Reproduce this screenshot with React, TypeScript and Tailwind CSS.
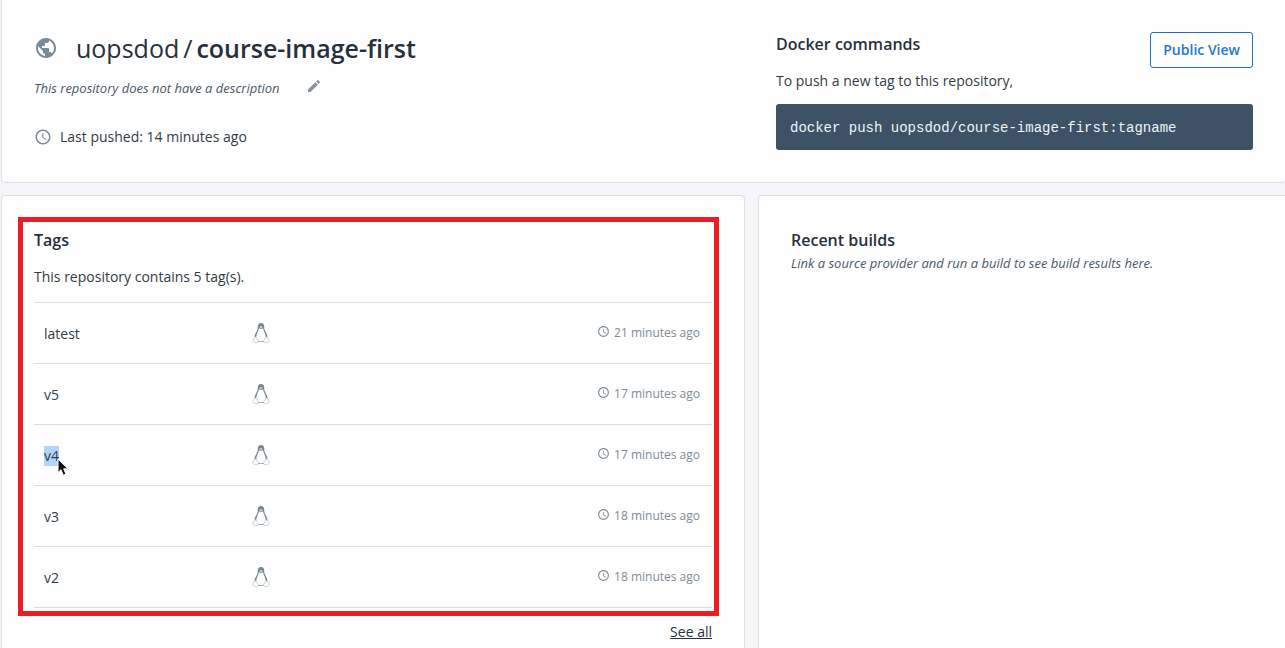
import { MdAccessTime, MdEdit, MdPublic } from "react-icons/md";

type Tag = { name: string; pushed: string; selected?: boolean };

const tags: Tag[] = [
  { name: "latest", pushed: "21 minutes ago" },
  { name: "v5", pushed: "17 minutes ago" },
  { name: "v4", pushed: "17 minutes ago", selected: true },
  { name: "v3", pushed: "18 minutes ago" },
  { name: "v2", pushed: "18 minutes ago" },
];

function Penguin() {
  return (
    <svg viewBox="0 0 18 22" className="mx-auto block h-[22px] w-[18px]" role="img" aria-label="Linux">
      <path
        d="M9 1C6.700 1 5.800 2.500 5.800 4.600 5.900 7.200 5.300 8.400 4.200 10.200 3.200 11.900 2.500 13.500 2.600 15.300L5.500 20H12.500L15.400 15.300C15.500 13.500 14.800 11.900 13.800 10.200 12.700 8.400 12.100 7.200 12.200 4.600 12.200 2.500 11.300 1 9 1Z"
        fill="#76858f"
      />
      <path
        d="M6.900 6.200C6.900 8.800 4.200 11.500 4.200 15.300 4.200 18 6.300 19.500 9 19.500S13.800 18 13.800 15.300C13.800 11.500 11.100 8.800 11.100 6.200 10 7 8 7 6.900 6.200Z"
        fill="#fff"
      />
      <path d="M7.200 4.700C8.200 4 9.800 4 10.800 4.700L9 6.200Z" fill="#e6eaed" />
      <path
        d="M3.300 15.200C2.800 16.200 1.300 16.200 1 17.200.9 18 1.100 18.600 1 19.300 1.100 20.100 4.100 20.800 5.200 20.700 6.500 20.600 6.700 19.300 6.100 18.300L4.600 15.900C4.200 15.100 3.600 14.800 3.300 15.200ZM14.700 15.200C15.200 16.200 16.700 16.200 17 17.200 17.100 18 16.900 18.600 17 19.300 16.900 20.100 13.900 20.800 12.800 20.700 11.500 20.600 11.300 19.300 11.900 18.300L13.400 15.900C13.800 15.100 14.400 14.800 14.700 15.200Z"
        fill="#fff"
        stroke="#b9c1c8"
        strokeWidth=".7"
      />
    </svg>
  );
}

function Pointer() {
  return (
    <svg viewBox="0 0 12 19" className="absolute top-3 left-[13px] h-[19px] w-3" aria-hidden="true">
      <path
        d="M1 1V14.500L4 11.700 6.300 17.300 9 16.200 6.700 10.800H11Z"
        fill="#111"
        stroke="#fff"
        strokeWidth="1"
      />
    </svg>
  );
}

function RepositoryHeader() {
  return (
    <header className="rounded-b-sm border-b border-l border-[#dcdfe5] bg-[#fefefe] p-8">
      <div className="grid grid-cols-[742fr_477fr]">
        <div>
          <div className="flex items-center">
            <MdPublic className="size-6 text-[#7a8a97]" />
            <h1 className="ml-[18px] text-[25px] leading-8 text-[#27303a]">
              uopsdod<span className="mx-1">/</span>
              <span className="font-semibold">course-image-first</span>
            </h1>
          </div>
          <div className="mt-[14px] flex items-center">
            <p className="text-[13px] leading-5 text-[#4a5866] italic">
              This repository does not have a description
            </p>
            <button type="button" aria-label="Edit description" className="-mt-1 ml-[26px] text-[#8492a0]">
              <MdEdit className="size-4" />
            </button>
          </div>
          <p className="mt-[29px] flex items-center text-sm text-[#323c46]">
            <MdAccessTime className="mr-2 size-[18px] text-[#7a8a97]" />
            Last pushed: 14 minutes ago
          </p>
        </div>
        <section>
          <div className="flex items-start justify-between">
            <div>
              <h2 className="text-base font-semibold">Docker commands</h2>
              <p className="mt-[15px] text-sm text-[#323c46]">To push a new tag to this repository,</p>
            </div>
            <button
              type="button"
              className="h-9 rounded-[3px] border border-[#1c6fc4] px-3 text-sm font-semibold text-[#2379d0]"
            >
              Public View
            </button>
          </div>
          <pre className="mt-[13px] rounded-[3px] bg-[#3d5265] px-[14px] pt-[14px] pb-3 font-['Courier_New','Liberation_Mono',monospace] text-sm text-[#f0f4f7]">
            docker push uopsdod/course-image-first:tagname
          </pre>
        </section>
      </div>
    </header>
  );
}

function TagsPanel() {
  return (
    <section className="rounded-t-sm border border-b-0 border-[#dcdfe5] bg-[#fefefe] px-8 pt-8">
      <div className="relative">
        <h2 className="text-base font-semibold">Tags</h2>
        <p className="mt-[15px] text-sm text-[#323c46]">This repository contains 5 tag(s).</p>
        <table className="mt-[15px] w-full border-t border-[#dcdfe2] text-sm text-[#323c46]">
          <tbody>
            {tags.map((tag) => (
              <tr key={tag.name} className="h-[61px] border-b border-[#dcdfe2]">
                <td className="w-[30%] pt-[2px] pl-[10px]">
                  {tag.selected ? (
                    <span className="relative inline-block bg-[#b3d4fc]">
                      {tag.name}
                      <Pointer />
                    </span>
                  ) : (
                    tag.name
                  )}
                </td>
                <td className="w-[7%]">
                  <Penguin />
                </td>
                <td className="pr-3 text-xs text-[#7f8c97]">
                  <span className="flex items-center justify-end gap-1">
                    <MdAccessTime className="-mt-[3px] size-[13px]" />
                    {tag.pushed}
                  </span>
                </td>
              </tr>
            ))}
          </tbody>
        </table>
        <div className="pointer-events-none absolute -top-[11px] -right-[7px] -bottom-2 -left-4 border-[5px] border-[#ee1c25]" />
      </div>
      <p className="mt-[14px] text-right text-sm">
        <a href="#tags" className="underline">
          See all
        </a>
      </p>
    </section>
  );
}

function BuildsPanel() {
  return (
    <section className="rounded-tl-sm border border-r-0 border-b-0 border-[#dcdfe5] bg-[#fefefe] px-8 pt-8">
      <h2 className="text-base font-semibold">Recent builds</h2>
      <p className="mt-px text-[13px] leading-5 text-[#4a5866] italic">
        Link a source provider and run a build to see build results here.
      </p>
    </section>
  );
}

export default function App() {
  return (
    <div className="flex min-h-screen flex-col bg-[#f6f6f9] pl-px font-['Open_Sans',sans-serif] text-[#27303a]">
      <RepositoryHeader />
      <main className="mt-3 grid flex-1 grid-cols-[744fr_527fr] gap-[13px]">
        <TagsPanel />
        <BuildsPanel />
      </main>
    </div>
  );
}
